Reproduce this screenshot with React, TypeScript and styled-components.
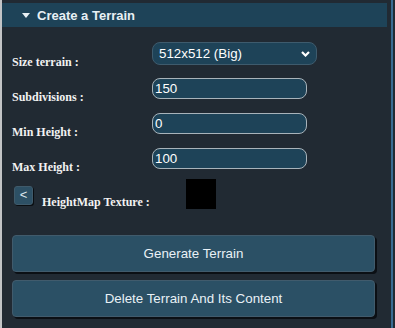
import React from "react";
import styled, { createGlobalStyle } from "styled-components";

const Global = createGlobalStyle`
  html, body { margin: 0; padding: 0; background: #212a33; }
  * { box-sizing: border-box; }
`;

const Page = styled.div`
  display: flex;
  width: 395px;
  height: 328px;
  border-left: 2px solid #c2c4c6;
  background: #212a33;
  overflow: hidden;
`;

const Content = styled.div`
  flex: 1;
  display: flex;
  flex-direction: column;
  padding-top: 3px;
`;

const Rail = styled.div`
  width: 2px;
  margin-right: 2px;
  background: #3a6b92;
`;

const Header = styled.div`
  display: flex;
  align-items: center;
  height: 24px;
  margin-right: 4px;
  padding-left: 20px;
  gap: 7px;
  background: #1e4358;
  color: #e8f0f4;
  font: bold 13px "Liberation Sans", Arial, sans-serif;
`;

const Form = styled.div`
  display: flex;
  flex-direction: column;
  gap: 4px;
  padding: 15px 0 0 10px;
`;

const Row = styled.div<{ $h?: number; $lift?: number }>`
  display: grid;
  grid-template-columns: 140px auto;
  align-items: start;
  height: ${(p) => p.$h ?? 31}px;
  & > label { padding-top: ${(p) => p.$lift ?? 12}px; }
`;

const Label = styled.label`
  display: block;
  color: #f2f2f2;
  font: bold 12px "Liberation Serif", "Times New Roman", serif;
  line-height: 14px;
`;

const SelectBox = styled.div`
  position: relative;
  display: flex;
  align-items: center;
  width: 165px;
  height: 23px;
  padding-left: 6px;
  border: 1px solid #3e5b6d;
  border-radius: 8px;
  background: #1e4358;
  color: #ffffff;
  font: 13.33px "Liberation Sans", Arial, sans-serif;
  & svg { position: absolute; right: 6px; top: 8px; }
`;

const Input = styled.input`
  width: 155px;
  height: 21px;
  padding: 0 2px;
  border: 1px solid #a8b3ba;
  border-radius: 8px;
  background: #1e4358;
  color: #ffffff;
  outline: none;
  font: 13.33px "Liberation Sans", Arial, sans-serif;
`;

const TextureRow = styled.div`
  display: flex;
  align-items: flex-start;
  height: 30px;
  margin-left: 12px;
`;

const SmallButton = styled.button`
  display: flex;
  align-items: center;
  justify-content: center;
  width: 19px;
  height: 19px;
  margin-top: 7px;
  padding: 0 0 2px;
  border: 1px solid #3f5a6b;
  border-radius: 3px;
  background: #2d5065;
  box-shadow: 1px 1px 0 #0a0e12;
  color: #dfe8ee;
  font: 13px "Liberation Sans", Arial, sans-serif;
`;

const TextureLabel = styled(Label)`
  width: 144px;
  margin-left: 9px;
  padding-top: 16px;
`;

const Swatch = styled.div`
  width: 30px;
  height: 30px;
  background: #000000;
`;

const Actions = styled.div`
  display: flex;
  flex-direction: column;
  gap: 8px;
  margin: 26px 16px 0 10px;
`;

const ActionButton = styled.button`
  height: 37px;
  border: 1px solid #415b6c;
  border-radius: 4px;
  background: #2b5065;
  box-shadow: 2px 2px 0 #0b0f14;
  color: #e9f1f6;
  font: 13.33px "Liberation Sans", Arial, sans-serif;
`;

export default function App() {
  return (
    <>
      <Global />
      <Page>
        <Content>
          <Header>
            <svg width="8" height="5" viewBox="0 0 8 5">
              <polygon points="0,0 8,0 4,5" fill="#e8f0f4" />
            </svg>
            <span>Create a Terrain</span>
          </Header>
          <Form>
            <Row $h={32} $lift={13}>
              <Label>Size terrain :</Label>
              <SelectBox>
                512x512 (Big)
                <svg width="9" height="6" viewBox="0 0 9 6">
                  <polyline points="1,1 4.5,4.5 8,1" fill="none" stroke="#ffffff" strokeWidth="2.2" />
                </svg>
              </SelectBox>
            </Row>
            <Row>
              <Label>Subdivisions :</Label>
              <Input defaultValue="150" />
            </Row>
            <Row>
              <Label>Min Height :</Label>
              <Input defaultValue="0" />
            </Row>
            <Row>
              <Label>Max Height :</Label>
              <Input defaultValue="100" />
            </Row>
          </Form>
          <TextureRow>
            <SmallButton>&lt;</SmallButton>
            <TextureLabel>HeightMap Texture :</TextureLabel>
            <Swatch />
          </TextureRow>
          <Actions>
            <ActionButton>Generate Terrain</ActionButton>
            <ActionButton>Delete Terrain And Its Content</ActionButton>
          </Actions>
        </Content>
        <Rail />
      </Page>
    </>
  );
}
